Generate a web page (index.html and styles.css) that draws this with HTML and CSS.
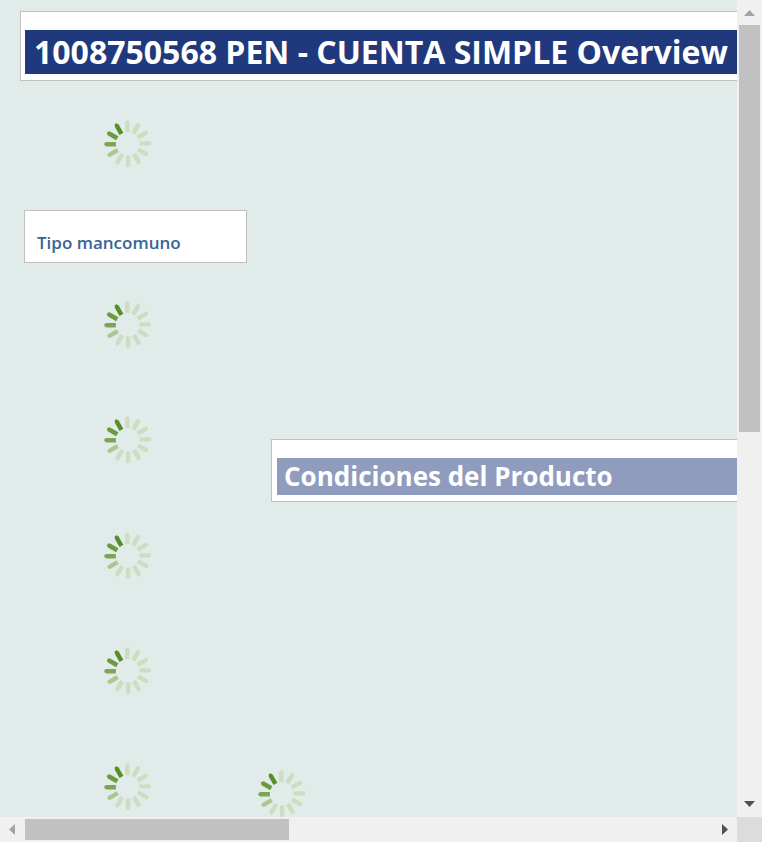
FILE: index.html
```html
<!DOCTYPE html>
<html lang="es">
<head>
<meta charset="utf-8">
<title>1008750568 PEN - CUENTA SIMPLE Overview</title>
<link rel="stylesheet" href="styles.css">
</head>
<body>
<svg width="0" height="0" class="defs" aria-hidden="true">
  <defs>
    <path id="spoke" d="M21.100 12V2.500L22.200 .5H24.400L25.500 2.500V12Z"/>
    <symbol id="spinner" viewBox="0 0 48 48">
      <g fill="#cedcbf">
        <use href="#spoke"/>
        <use href="#spoke" transform="rotate(30 23.700 23.800)"/>
        <use href="#spoke" transform="rotate(60 23.700 23.800)"/>
        <use href="#spoke" transform="rotate(90 23.700 23.800)"/>
        <use href="#spoke" transform="rotate(120 23.700 23.800)"/>
        <use href="#spoke" transform="rotate(150 23.700 23.800)"/>
        <use href="#spoke" transform="rotate(180 23.700 23.800)"/>
        <use href="#spoke" transform="rotate(210 23.700 23.800)"/>
      </g>
      <use href="#spoke" fill="#acc593" transform="rotate(240 23.700 23.800)"/>
      <use href="#spoke" fill="#7ba655" transform="rotate(270 23.700 23.800)"/>
      <use href="#spoke" fill="#6a9b3f" transform="rotate(300 23.700 23.800)"/>
      <use href="#spoke" fill="#588e28" transform="rotate(330 23.700 23.800)"/>
    </symbol>
  </defs>
</svg>
<div class="window">
  <main class="view">
    <header class="panel panel-title">
      <h1>1008750568 PEN - CUENTA SIMPLE Overview</h1>
    </header>
    <div class="columns">
      <section class="side">
        <svg class="spinner"><use href="#spinner"/></svg>
        <div class="panel panel-field"><h3>Tipo mancomuno</h3></div>
        <div class="loading">
          <svg class="spinner"><use href="#spinner"/></svg>
          <svg class="spinner"><use href="#spinner"/></svg>
          <svg class="spinner"><use href="#spinner"/></svg>
          <svg class="spinner"><use href="#spinner"/></svg>
          <svg class="spinner"><use href="#spinner"/></svg>
        </div>
      </section>
      <section class="detail">
        <div class="panel panel-section"><h2>Condiciones del Producto</h2></div>
        <svg class="spinner"><use href="#spinner"/></svg>
      </section>
    </div>
  </main>
  <div class="bar bar-y">
    <button type="button" aria-label="Arriba" class="arrow off"><svg viewBox="0 0 25 25"><path d="M7 16L12.500 10L18 16Z"/></svg></button>
    <div class="thumb"></div>
    <button type="button" aria-label="Abajo" class="arrow"><svg viewBox="0 0 25 25"><path d="M7 9L12.500 15L18 9Z"/></svg></button>
  </div>
  <div class="bar bar-x">
    <button type="button" aria-label="Izquierda" class="arrow off"><svg viewBox="0 0 25 25"><path d="M15 7L9 12.500L15 18Z"/></svg></button>
    <div class="thumb"></div>
    <button type="button" aria-label="Derecha" class="arrow"><svg viewBox="0 0 25 25"><path d="M10 7L16 12.500L10 18Z"/></svg></button>
  </div>
  <div class="corner"></div>
</div>
</body>
</html>
```
FILE: styles.css
```css
* {
  box-sizing: border-box;
}

body {
  margin: 0;
  font-family: "Trebuchet MS", "Open Sans", sans-serif;
}

.defs {
  position: absolute;
}

.window {
  display: grid;
  grid-template-columns: minmax(0, 1fr) 25px;
  grid-template-rows: minmax(0, 1fr) 25px;
  height: 100vh;
}

.view {
  overflow: hidden;
  padding-top: 11px;
  background: #e1ebe9;
}

.panel {
  border: 1px solid #c0c0c0;
  background: #fff;
}

h1,
h2,
h3 {
  margin: 0;
  white-space: nowrap;
}

h1,
h2 {
  color: #fff;
  font-weight: 700;
}

.panel-title {
  margin-left: 20px;
  padding: 18px 0 6px 4px;
  border-right: 0;
}

h1 {
  padding-left: 9px;
  background: #20397c;
  font-size: 32px;
  line-height: 44px;
}

.columns {
  display: flex;
}

.side {
  flex: none;
  width: 223px;
  margin-left: 24px;
  padding-top: 39px;
}

.spinner {
  display: block;
  width: 48px;
  height: 48px;
}

.side .spinner {
  margin-left: 80px;
}

.panel-field {
  margin: 42px 0 38px;
  padding: 20px 12px 7px;
}

h3 {
  color: #366499;
  font-size: 17px;
  font-weight: 600;
  line-height: 24px;
}

.loading .spinner + .spinner {
  margin-top: 67px;
}

.loading .spinner:nth-child(odd) {
  margin-top: 68px;
}

.loading .spinner:first-child {
  margin-top: 0;
}

.detail {
  flex: 1;
  min-width: 0;
  margin-left: 11px;
  padding-top: 358px;
}

.panel-section {
  margin: 0 0 268px 13px;
  padding: 18px 0 6px 5px;
  border-right: 0;
}

h2 {
  padding-left: 7px;
  background: #909cbe;
  font-size: 26px;
  line-height: 37px;
}

.bar {
  display: flex;
  background: #f0f0f0;
}

.bar-y {
  flex-direction: column;
}

.arrow {
  flex: none;
  width: 25px;
  height: 25px;
  padding: 0;
  border: 0;
  background: none;
  fill: #505050;
}

.arrow.off {
  fill: #a3a3a3;
}

.arrow svg {
  display: block;
}

.thumb {
  flex: none;
  background: #c1c1c1;
}

.bar-y .thumb {
  height: calc((100% - 50px) * 0.53);
  margin: 0 2px auto;
}

.bar-x .thumb {
  width: calc((100% - 50px) * 0.384);
  margin: 2px auto 2px 0;
}

.corner {
  background: #dcdcdc;
}
```
